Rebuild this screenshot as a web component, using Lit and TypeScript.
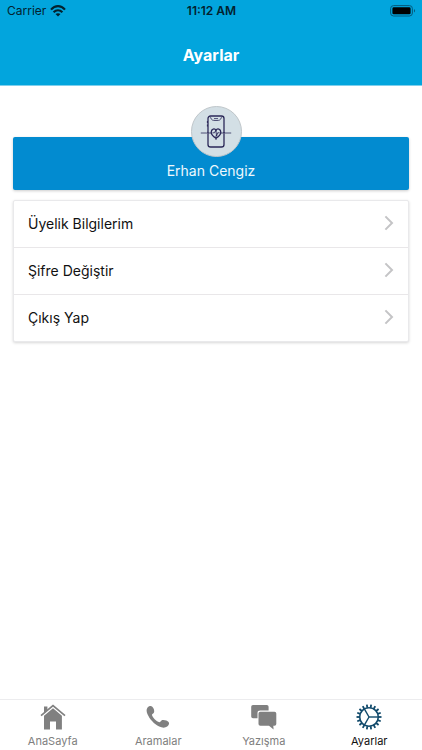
import { LitElement, html, svg, css } from "lit";
import { customElement, property, state } from "lit/decorators.js";
import { classMap } from "lit/directives/class-map.js";

const wifi = html`<svg width="16" height="12" viewBox="0 0 16 12" aria-hidden="true">
  <g fill="none" stroke="currentColor" stroke-width="2.1">
    <path d="M1 4.6C5-.1 11-.1 15 4.6" />
    <path d="M3.6 7.3c2.6-2.8 6.2-2.8 8.8 0" />
  </g>
  <path d="M8 11.6L5.5 9.1c1.4-1.3 3.6-1.3 5 0z" fill="currentColor" />
</svg>`;

const battery = html`<svg width="26" height="12" viewBox="0 0 26 12" aria-hidden="true">
  <rect x=".6" y=".6" width="21.8" height="10.4" rx="3" fill="none" stroke="#045a7c" stroke-width="1" />
  <rect x="2.4" y="2.3" width="18.2" height="7" rx="1.4" fill="#000" />
  <path d="M24 4.1c1.4.5 1.4 3 0 3.5z" fill="#045a7c" />
</svg>`;

const chevron = html`<svg width="10" height="16" viewBox="0 0 10 16" aria-hidden="true">
  <path d="M1.4 1.4L8 8l-6.6 6.6" fill="none" stroke="#c4c4c6" stroke-width="2" />
</svg>`;

const avatar = html`<svg width="32" height="34" viewBox="0 0 32 34" fill="none" stroke="#2b2858" aria-hidden="true">
  <rect x="8" y="1" width="16" height="31" rx="2.6" stroke-width="1.3" />
  <path d="M10.500 2.200c.8 3 2 3.300 5.500 3.300s4.700-.3 5.500-3.300" stroke-width=".8" />
  <path d="M14 3.600h4" stroke-width=".8" />
  <path d="M7.400 6v2M7.400 9.500v2" stroke-width="1" />
  <path d="M.8 18h6l1-.8 1 .8h2.400M20.800 18h2.200l1-.8 1 .8h6.200" stroke-width=".8" />
  <path d="M16 23.300c-2.800-1.800-4.800-3.600-4.800-6 0-3.600 3.600-4.400 4.800-1.900 1.200-2.500 4.800-1.700 4.800 1.900 0 2.400-2 4.200-4.800 6z" stroke-width="1.3" />
  <path d="M12.500 17.800h2l1.300-2.600.8 5.800 1-3.200h2M16 20.500v4.500" stroke-width=".9" />
</svg>`;

const home = html`<svg width="26" height="26" viewBox="0 0 26 26" fill="currentColor" aria-hidden="true">
  <path d="M4 2.500h3.400v4L4 9.400z" />
  <path d="M1 11.600L13 1.500l12 10.100" fill="none" stroke="currentColor" stroke-width="1.700" />
  <path d="M13 4.300l8.900 7.500V25.500h-5.900v-7.900h-6v7.900H4V11.800z" />
</svg>`;

const phone = html`<svg width="26" height="26" viewBox="0 0 26 26" fill="currentColor" aria-hidden="true">
  <path d="M2.300 3.900C3.500 2.200 5.900 1.500 7.300 2.700c1.500 1.400 2.400 4.300 1.700 5.700-.5 1-2 1.300-2 2.400 0 2.300 4.700 7 7.300 7.400 1.300.2 1.700-1.700 2.900-2.100 1.900-.6 5.200.4 6.400 1.900 1.100 1.400.2 3.400-1.400 4.600-2.200 1.600-5.100 1.400-8 0-5-2.500-9.500-7.300-11.700-12.300-1-2.400-1.300-4.900-.2-6.400z" />
</svg>`;

const chat = html`<svg width="26" height="26" viewBox="0 0 26 26" fill="currentColor" aria-hidden="true">
  <path d="M2 1h13.800q1.800 0 1.800 1.800V6.600H9.200Q6.500 6.600 6.500 9v5.300H2Q.2 14.300.2 12.500V2.800Q.2 1 2 1z" />
  <path d="M9.300 7.800h14.200q1.800 0 1.800 1.800v10.300q0 1.800-1.800 1.800h-1.200l.3 3.900-4.600-3.900H9.300q-1.800 0-1.800-1.800V9.600q0-1.800 1.800-1.800z" />
</svg>`;

const TEETH = Array.from({ length: 18 }, (_, i) => i * 20);
const gear = html`<svg width="26" height="26" viewBox="0 0 26 26" fill="none" stroke="currentColor" aria-hidden="true">
  <circle cx="13" cy="13" r="9.300" stroke-width="1.600" />
  ${TEETH.map((a) => svg`<path d="M13 3.700V.5" stroke-width="1.800" transform="rotate(${a + 10} 13 13)" />`)}
  ${[90, 210, 330].map((a) => svg`<path d="M13 13V4" stroke-width="1.400" transform="rotate(${a} 13 13)" />`)}
</svg>`;

@customElement("status-bar")
class StatusBar extends LitElement {
  static styles = css`
    :host {
      display: grid;
      grid-template-columns: 1fr auto 1fr;
      align-items: center;
      height: 21px;
      padding: 0 6px 0 7px;
      color: #03222f;
      font-size: 12px;
    }
    .carrier {
      display: flex;
      align-items: center;
      gap: 4px;
    }
    .time {
      font-weight: 600;
    }
    .battery {
      display: flex;
      justify-content: flex-end;
    }
  `;
  render() {
    return html`
      <span class="carrier">Carrier ${wifi}</span>
      <span class="time">11:12 AM</span>
      <span class="battery">${battery}</span>
    `;
  }
}

@customElement("settings-list")
class SettingsList extends LitElement {
  @property({ type: Array }) items: string[] = [];
  static styles = css`
    :host {
      display: block;
      background: #fff;
      border: 1px solid #e9e9eb;
      border-radius: 2px;
      box-shadow: 0 1px 3px rgba(0, 0, 0, 0.16);
    }
    .list {
      margin: 0;
      padding: 0;
      list-style: none;
    }
    .item + .item {
      border-top: 1px solid #e9e7e9;
    }
    .row {
      display: flex;
      align-items: center;
      justify-content: space-between;
      width: 100%;
      height: 46px;
      padding: 0 14px 2px;
      border: 0;
      background: none;
      color: #111;
      font: inherit;
      font-size: 14px;
      text-align: left;
      cursor: pointer;
    }
  `;
  render() {
    return html`<ul class="list">
      ${this.items.map(
        (label) => html`<li class="item"><button class="row" type="button">${label} ${chevron}</button></li>`
      )}
    </ul>`;
  }
}

@customElement("app-root")
class AppRoot extends LitElement {
  @state() private active = "Ayarlar";

  private tabs = [
    { label: "AnaSayfa", icon: home },
    { label: "Aramalar", icon: phone },
    { label: "Yazışma", icon: chat },
    { label: "Ayarlar", icon: gear },
  ];

  static styles = css`
    :host {
      display: flex;
      flex-direction: column;
      min-height: 100vh;
      background: #fff;
      font-family: Inter, "Liberation Sans", sans-serif;
    }
    .header {
      padding-bottom: 20px;
      background: #02a5dd;
      border-bottom: 1px solid #7fcfec;
    }
    .title {
      margin: 24px 0 0;
      color: #fff;
      font-size: 16px;
      line-height: 20px;
      font-weight: 700;
      text-align: center;
    }
    .content {
      flex: 1;
      display: flex;
      flex-direction: column;
      gap: 10px;
      padding: 51px 13px 24px;
    }
    .profile {
      display: flex;
      flex-direction: column;
      align-items: center;
      height: 53px;
      border-radius: 2px;
      background: #028bd0;
      box-shadow: 0 1px 3px rgba(0, 0, 0, 0.2);
    }
    .avatar {
      display: flex;
      align-items: center;
      justify-content: center;
      box-sizing: border-box;
      width: 51px;
      height: 51px;
      margin: -31px 0 0 10px;
      border: 1px solid #bfc6ca;
      border-radius: 50%;
      background: #d3dfe5;
    }
    .name {
      margin: 4px 0 0;
      color: #eef8fd;
      font-size: 14px;
      line-height: 20px;
    }
    .tabs {
      display: flex;
      position: sticky;
      bottom: 0;
      border-top: 1px solid #ececee;
      background: #fff;
    }
    .tab {
      flex: 1;
      display: flex;
      flex-direction: column;
      align-items: center;
      gap: 5px;
      padding: 4px 0 2px;
      color: #808080;
      font-size: 11px;
      line-height: 13px;
      text-decoration: none;
    }
    .icon {
      display: flex;
    }
    .on {
      color: #111;
    }
    .on .icon {
      color: #114a6b;
    }
  `;

  private select(e: Event, label: string) {
    e.preventDefault();
    this.active = label;
  }

  render() {
    return html`
      <header class="header">
        <status-bar></status-bar>
        <h1 class="title">Ayarlar</h1>
      </header>
      <main class="content">
        <section class="profile">
          <div class="avatar">${avatar}</div>
          <p class="name">Erhan Cengiz</p>
        </section>
        <settings-list .items=${["Üyelik Bilgilerim", "Şifre Değiştir", "Çıkış Yap"]}></settings-list>
      </main>
      <nav class="tabs">
        ${this.tabs.map(
          (t) => html`<a
            href="#"
            class=${classMap({ tab: true, on: t.label === this.active })}
            @click=${(e: Event) => this.select(e, t.label)}
            ><span class="icon">${t.icon}</span>${t.label}</a
          >`
        )}
      </nav>
    `;
  }
}
